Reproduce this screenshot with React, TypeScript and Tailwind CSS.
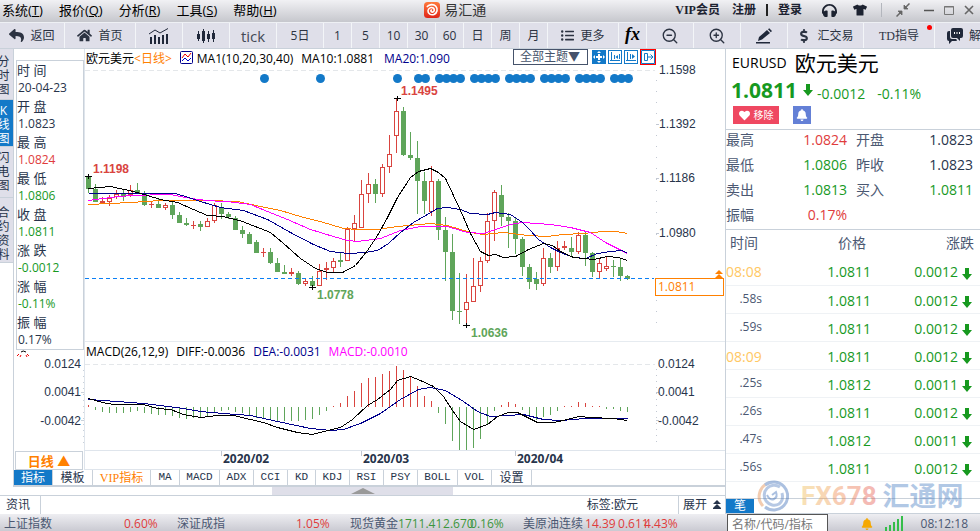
import type { ReactNode } from "react";
import { FaReply, FaHome, FaTshirt, FaHeadphones, FaDollarSign, FaHeart, FaBell, FaListUl } from "react-icons/fa";
import { ZoomIn, ZoomOut } from "lucide-react";

const RED = "#d9443f";
const GREEN = "#5fa55a";
const NAVY = "#00008b";

// [open/close top, open/close bottom, high, low, rising]
type Candle = [number, number, number, number, 0 | 1];

const candles: Candle[] = [
  [176, 189, 174, 193, 0], [189, 202, 184, 202, 0], [201, 203, 197, 203, 1], [198, 202, 195, 206, 1],
  [194, 197, 190, 199, 1], [193, 197, 190, 201, 0], [190, 195, 185, 197, 1], [190, 194, 183, 194, 0],
  [193, 205, 191, 206, 0], [204, 205, 202, 208, 1], [204, 208, 198, 208, 0], [205, 208, 203, 210, 1],
  [205, 215, 200, 219, 0], [215, 223, 212, 223, 0], [223, 225, 218, 226, 0], [225, 226, 221, 229, 1],
  [224, 227, 221, 231, 0], [221, 227, 218, 227, 1], [205, 221, 203, 223, 1], [207, 214, 203, 219, 0],
  [214, 217, 212, 219, 0], [218, 230, 216, 230, 0], [230, 234, 226, 238, 0], [234, 244, 232, 244, 0],
  [242, 253, 240, 253, 0], [252, 253, 248, 257, 1], [252, 263, 248, 264, 0], [263, 272, 258, 272, 0],
  [272, 274, 265, 274, 0], [272, 274, 268, 276, 1], [273, 284, 271, 285, 0], [281, 284, 278, 286, 1],
  [281, 286, 276, 287, 0], [271, 286, 264, 286, 1], [268, 270, 262, 280, 1], [261, 268, 258, 273, 1],
  [260, 262, 252, 267, 0], [229, 261, 227, 261, 1], [223, 229, 215, 241, 1], [194, 228, 180, 228, 1],
  [184, 194, 173, 203, 1], [184, 194, 179, 203, 0], [167, 194, 164, 197, 1], [154, 167, 135, 173, 1],
  [111, 136, 98, 153, 1], [111, 155, 107, 156, 0], [155, 158, 132, 160, 0], [158, 181, 141, 214, 0],
  [181, 201, 172, 214, 0], [181, 212, 166, 216, 1], [181, 230, 179, 240, 0], [230, 252, 217, 281, 0],
  [252, 311, 234, 320, 0], [311, 312, 273, 324, 0], [302, 310, 274, 325, 1], [286, 302, 258, 302, 1],
  [261, 286, 257, 292, 1], [221, 261, 213, 263, 1], [192, 221, 190, 241, 1], [195, 217, 185, 226, 0],
  [217, 221, 213, 248, 0], [221, 239, 218, 254, 0], [239, 267, 237, 276, 0], [267, 282, 264, 289, 0],
  [279, 284, 272, 290, 0], [258, 284, 248, 286, 1], [258, 267, 253, 273, 0], [248, 267, 241, 271, 1],
  [246, 248, 241, 250, 1], [248, 252, 237, 257, 0], [235, 252, 232, 254, 1], [235, 253, 232, 266, 0],
  [253, 272, 252, 277, 0], [263, 272, 258, 278, 1], [266, 269, 256, 271, 1], [266, 267, 260, 277, 0],
  [267, 276, 259, 281, 0], [276, 279, 275, 280, 0],
];

// end of each histogram bar, the zero line is at 407
const histogram = [
  405, 410, 412, 413, 413, 413, 412, 411, 413, 414, 415, 415, 416, 418, 419, 418, 417, 417, 412, 411,
  410, 412, 413, 415, 418, 419, 420, 421, 421, 421, 421, 420, 419, 415, 411, 406, 403, 396, 391, 383,
  378, 377, 374, 371, 366, 370, 376, 386, 396, 401, 413, 424, 441, 450, 450, 448, 439, 425, 411, 405,
  402, 404, 410, 415, 420, 417, 415, 411, 406, 406, 402, 403, 406, 406, 409, 409, 411, 412,
];

const averages = [
  {
    color: "#ff8000",
    points: "88,204 110,203 130,202 160,200 207,200 237,201 260,206 280,210 303,217 320,221 343,228 357,229 377,229 397,226 430,223 447,225 460,229 470,232 483,234 503,232 527,235 547,236 563,234 583,233 603,231 615,231 627,233",
  },
  {
    color: "#ff00ff",
    points: "88,200 110,197 130,195 170,194 180,196 197,199 220,201 227,201 250,204 267,211 287,219 310,229 333,236 347,240 357,241 380,238 400,230 420,226 447,226 460,230 467,232 483,233 495,229 510,224 522,222 550,224 570,227 590,232 605,242 627,253",
  },
  {
    color: NAVY,
    points: "88,193 175,193 188,197 200,201 220,207 243,210 267,219 290,232 313,244 330,251 348,253 365,252 377,250 388,243 400,232 413,222 427,214 437,208 447,207 460,209 470,213 487,214 495,212 510,214 522,222 530,230 538,239 550,247 560,252 573,257 585,258 597,253 610,251 622,250 627,253",
  },
  {
    color: "#000",
    points: "88,188 110,186 133,191 147,195 160,199 177,202 193,209 207,215 223,216 242,221 270,232 283,243 300,258 315,268 327,272 342,272 355,265 367,250 377,235 387,217 397,197 410,177 418,171 430,168 438,172 445,178 460,210 470,233 480,251 488,255 495,254 503,257 515,256 528,249 543,243 552,245 560,251 573,257 583,258 593,259 607,256 618,257 627,260",
  },
];

const macdLines = [
  {
    color: NAVY,
    points: "88,399 103,400 143,403 167,406 183,408 200,411 223,413 250,415 277,421 310,428 330,430 343,429 360,423 380,413 400,399 418,389 430,387 445,390 463,401 477,411 490,416 523,414 543,419 560,420 585,418 627,418",
  },
  {
    color: "#000",
    points: "88,398 102,402 113,404 143,404 157,408 170,409 183,414 200,417 217,415 233,415 250,419 263,422 277,427 297,432 312,434 323,431 340,427 352,419 367,405 377,399 390,389 397,380 410,376 420,380 433,386 443,396 452,410 460,421 473,429 487,424 497,416 508,412 517,412 527,417 537,422 553,422 567,419 578,416 590,417 613,418 627,420",
  },
];

const newsDots = [
  264, 320, 397, 418, 425, 439, 446, 453, 460, 474, 481, 488, 495, 509, 516, 523, 530, 544, 551, 558,
  565, 579, 586, 593, 600, 614, 621, 628,
];

const quote = [
  { label: "时 间", value: "20-04-23", color: "text-[#27344b]" },
  { label: "开 盘", value: "1.0823", color: "text-[#27344b]" },
  { label: "最 高", value: "1.0824", color: "text-[#e03c3c]" },
  { label: "最 低", value: "1.0806", color: "text-[#17991f]" },
  { label: "收 盘", value: "1.0811", color: "text-[#17991f]" },
  { label: "涨 跌", value: "-0.0012", color: "text-[#17991f]" },
  { label: "涨 幅", value: "-0.11%", color: "text-[#17991f]" },
  { label: "振 幅", value: "0.17%", color: "text-[#27344b]" },
];

const ticks = [
  { time: "08:08", price: "1.0811", change: "0.0012" },
  { time: ".58s", price: "1.0811", change: "0.0012" },
  { time: ".59s", price: "1.0811", change: "0.0012" },
  { time: "08:09", price: "1.0811", change: "0.0012" },
  { time: ".25s", price: "1.0812", change: "0.0011" },
  { time: ".26s", price: "1.0811", change: "0.0012" },
  { time: ".47s", price: "1.0812", change: "0.0011" },
  { time: ".56s", price: "1.0811", change: "0.0012" },
];

const menus = [
  ["系统", "T"],
  ["报价", "Q"],
  ["分析", "R"],
  ["工具", "S"],
  ["帮助", "H"],
];

const indicators = [
  { name: "MA", width: "w-[29px]" },
  { name: "MACD", width: "w-10" },
  { name: "ADX", width: "w-[34px]" },
  { name: "CCI", width: "w-[34px]" },
  { name: "KD", width: "w-7" },
  { name: "KDJ", width: "w-[34px]" },
  { name: "RSI", width: "w-[34px]" },
  { name: "PSY", width: "w-[34px]" },
  { name: "BOLL", width: "w-10" },
  { name: "VOL", width: "w-[34px]" },
];

function TitleBar() {
  return (
    <header className="flex h-[22px] shrink-0 items-center justify-between bg-linear-to-b from-[#f1f1f4] to-[#c6c7cd] pb-0.5 text-[#1c2230]">
      <nav className="flex flex-[426] gap-4 pl-0.5 text-[13px] leading-5">
        {menus.map(([label, key]) => (
          <button key={key} className="whitespace-nowrap text-black">
            {label}(<u>{key}</u>)
          </button>
        ))}
      </nav>
      <div className="flex items-center gap-1 text-sm leading-5 text-[#333]">
        <svg className="size-4" viewBox="0 0 16 16">
          <defs>
            <linearGradient id="logo" x1="0" y1="0" x2="0" y2="1">
              <stop offset="0" stopColor="#ff7a3c" />
              <stop offset="1" stopColor="#e02418" />
            </linearGradient>
          </defs>
          <rect width="16" height="16" rx="3.5" fill="url(#logo)" />
          <path
            d="M3.3 4.6C5.2 2.2 9.6 1.8 11.8 4.2 14.2 6.8 13.3 11 10 12.4 7 13.6 3.8 11.7 4 8.7 4.2 6 7.2 4.7 9.2 6 11 7.3 10.4 9.9 8.4 10.1 6.9 10.2 6.4 8.6 7.4 8"
            fill="none"
            stroke="#fff"
            strokeWidth="1.6"
            strokeLinecap="round"
          />
        </svg>
        易汇通
      </div>
      <div className="flex flex-[492] items-center justify-end pr-1.5 text-[12px] leading-5 font-bold">
        <button className="whitespace-nowrap">
          <span className="font-['Liberation_Serif']">VIP</span>会员
        </button>
        <button className="ml-3">注册</button>
        <i className="mx-2.5 h-3 w-0.5 bg-[#222]" />
        <button>登录</button>
        <button aria-label="客服" className="ml-5">
          <FaHeadphones size={15} />
        </button>
        <button aria-label="皮肤" className="ml-4">
          <FaTshirt size={14} />
        </button>
        <i className="mx-3.5 h-3.5 w-px bg-[#b3b6bd]" />
        <button aria-label="缩小窗口">
          <svg className="size-3.5" viewBox="0 0 14 14" fill="#666" stroke="#666" strokeWidth="1.5">
            <path d="M13.5.5 9 5M.5 13.5 5 9" />
            <path d="M8 2v4h4zM6 12V8H2z" strokeWidth=".8" />
          </svg>
        </button>
        <button aria-label="最小化" className="ml-3.5">
          <svg className="h-3 w-2.5" viewBox="0 0 10 12">
            <path d="M0 6.5h10" stroke="#555" strokeWidth="1.5" />
          </svg>
        </button>
        <button aria-label="最大化" className="ml-2.5">
          <svg className="h-3 w-2.5" viewBox="0 0 10 12" fill="none" stroke="#777">
            <path d="M.5 2.5h9v8h-9zM0 3h10" />
          </svg>
        </button>
        <button aria-label="关闭" className="ml-2.5">
          <svg className="h-3 w-2.5" viewBox="0 0 10 12" stroke="#666" strokeWidth="1.6">
            <path d="m1 2 8 8M9 2l-8 8" />
          </svg>
        </button>
      </div>
    </header>
  );
}

function Tool({ width, label, children }: { width: string; label?: string; children: ReactNode }) {
  return (
    <button
      aria-label={label}
      className={`relative flex h-full shrink-0 items-center justify-center gap-1.5 border-r border-[#f3f5f8] whitespace-nowrap ${width}`}
    >
      {children}
    </button>
  );
}

function Toolbar() {
  return (
    <div className="flex h-[27px] shrink-0 overflow-hidden border-t border-b border-t-[#eef0f4] border-b-[#c9d1da] bg-[#dfdfe9] text-xs text-[#2c3342]">
      <Tool width="w-[65px]">
        <FaReply size={15} />
        返回
      </Tool>
      <Tool width="w-[71px]">
        <FaHome size={15} />
        首页
      </Tool>
      <Tool width="w-[47px]" label="分时">
        <svg className="h-4 w-5" viewBox="0 0 20 16" fill="#20283a">
          <path d="M1 9h2v7H1zM5 7h2v9H5zM9 9h2v7H9zM13 7h2v9h-2zM17 6h2v10h-2z" />
          <path d="m0 6 6-4 5 3 8-4.5" fill="none" stroke="#20283a" />
        </svg>
      </Tool>
      <Tool width="w-[47px]" label="K线">
        <svg className="h-4 w-5" viewBox="0 0 20 16" fill="#20283a">
          <path d="M2 3h1v10H2zM1 6h3v5H1zM7 1h1v14H7zM6 3h3v10H6zM12 3h1v11h-1zM11 6h3v5h-3zM17 2h1v12h-1zM16 5h3v6h-3z" />
        </svg>
      </Tool>
      <Tool width="w-[47px]">
        <span className="text-[15px] text-[#454a56]">tick</span>
      </Tool>
      <Tool width="w-[47px]">5日</Tool>
      {["1", "5", "10", "30", "60", "日", "周", "月"].map((p) => (
        <Tool key={p} width="w-7">
          {p}
        </Tool>
      ))}
      <Tool width="w-[71px]">
        <FaListUl size={13} />
        更多
      </Tool>
      <Tool width="w-7">
        <span className="pb-1 font-['Liberation_Serif'] text-lg leading-none font-bold text-black italic">fx</span>
      </Tool>
      <Tool width="w-[47px]" label="缩小">
        <ZoomOut size={18} strokeWidth={1.8} />
      </Tool>
      <Tool width="w-[47px]" label="放大">
        <ZoomIn size={18} strokeWidth={1.8} />
      </Tool>
      <Tool width="w-[47px]" label="画线">
        <svg className="h-4 w-[18px]" viewBox="0 0 18 16" fill="#20283a">
          <path d="m4 9 8-7 3 3-8 6.5L3 13zM13 1.2l1.2-.9L17 3l-1.2 1.2zM1 14h14v1.6H1z" />
        </svg>
      </Tool>
      <Tool width="w-[76px]">
        <FaDollarSign size={14} />
        汇交易
      </Tool>
      <Tool width="w-[71px]">
        <span>
          <span className="font-['Liberation_Serif']">TD</span>指导
        </span>
        <i className="absolute top-0.5 right-0.5 size-[5px] rounded-full bg-[#f00]" />
      </Tool>
      <Tool width="w-[71px]">
        <svg className="size-4" viewBox="0 0 16 16" fill="#20283a">
          <path d="M6 0h8q2 0 2 2v6q0 2-2 2h-1v3l-3-3H6q-2 0-2-2V2q0-2 2-2z" />
          <path d="M0 5q0-2 2-2h1v6q0 2 2 2h4l1 1q0 1-1 1H5l-3 3v-3q-2 0-2-2z" />
          <path d="M7 4h1v2H7zM9.500 4h1v2h-1zM12 4h1v2h-1z" fill="#fff" />
        </svg>
        解盘
      </Tool>
    </div>
  );
}

function SideTabs() {
  return (
    <nav className="flex w-3.5 shrink-0 flex-col overflow-hidden border-r border-[#c9d1da] text-xs leading-[14px] text-[#27344b]">
      {[
        { label: "分时图", style: "h-[51px] bg-[#dfdfe9] pt-1.5" },
        { label: "K线图", style: "h-[47px] bg-[#1379c8] text-white pt-1" },
        { label: "闪电图", style: "h-[51px] bg-[#dfdfe9] pt-1" },
        { label: "合约资料", style: "h-[65px] bg-[#dfdfe9] pt-2" },
      ].map((tab) => (
        <button key={tab.label} className={`flex flex-col items-center border-b border-[#c9d1da] ${tab.style}`}>
          {tab.label.split("").map((c) => (
            <span key={c} className="-ml-1.5">{c}</span>
          ))}
        </button>
      ))}
    </nav>
  );
}

function QuoteColumn() {
  return (
    <div className="flex w-[71px] shrink-0 flex-col border-r border-[#dfe5ec] pt-[11px]">
      <dl className="ml-0.5 border border-[#c9d1da] bg-white text-xs leading-[18px]">
        {quote.map((q) => (
          <div key={q.label}>
            <dt className="text-[13px] leading-[18px] text-[#27344b]">{q.label}</dt>
            <dd className={`pl-px ${q.color}`}>{q.value}</dd>
          </div>
        ))}
      </dl>
      <svg className="block h-[101px] w-full" viewBox="14 350 70 101">
        <path d="M21 352q2-2 5 0" fill="none" stroke="#000" />
        <path d="m19 354-2 2m4-1-1 2m6-2 1 2m0-3 2 2" stroke="#e00" fill="none" />
        <g className="font-['Liberation_Sans'] text-xs" fill="#27344b" textAnchor="end">
          <text x="81" y="368">0.0124</text>
          <text x="81" y="396">0.0041</text>
          <text x="81" y="425">-0.0042</text>
        </g>
        <path d="M83.500 370v76" stroke="#c9d1da" strokeDasharray="1 5" />
        <path d="M81 392.500h3M81 420.500h3" stroke="#c9d1da" />
      </svg>
      <button className="mx-px h-[19px] border border-[#c9d1da] text-[13px] leading-4 font-bold text-[#ff8000]">日线 ▲</button>
    </div>
  );
}

function PriceChart() {
  return (
    <svg className="block h-auto w-full overflow-visible" viewBox="85 69 640 273" shapeRendering="crispEdges">
      <path d="M85 70.500h570" stroke="#e4e7ea" strokeDasharray="5 3" />
      <path d="M656.500 80v252" stroke="#c2c8d2" strokeDasharray="1 10" />
      <path d="M656 124.500h3M656 178.500h3M656 233.500h3" stroke="#c2c8d2" />
      <g fill="#1379c8" shapeRendering="auto">
        {newsDots.map((x) => (
          <circle key={x} cx={x + 0.5} cy="78.500" r="4.500" />
        ))}
      </g>
      {candles.map(([top, bottom, high, low, up], i) => {
        const x = 88 + i * 7;
        const hollow = up && bottom - top > 2;
        return (
          <g key={i}>
            <rect x={x} y={high} width="1" height={low - high} fill={up ? RED : GREEN} />
            <rect x={x - 2} y={top} width="5" height={bottom - top} fill={up ? RED : GREEN} />
            {hollow && <rect x={x - 1} y={top + 1} width="3" height={bottom - top - 2} fill="#fff" />}
          </g>
        );
      })}
      <g fill="none" transform="translate(.5 .5)">
        {averages.map((line) => (
          <polyline key={line.color} points={line.points} stroke={line.color} />
        ))}
      </g>
      <path d="M85 278.500h569" stroke="#0a7ff5" strokeDasharray="4 3" />
      <path d="M85 176.500h7M88.500 174v5M394 98.500h7M397.500 96v5M309 287.500h7M312.500 285v5M463 325.500h7M466.500 323v5" stroke="#000" />
      <g className="font-['Liberation_Sans'] text-xs font-bold">
        <text x="93" y="173" fill={RED}>1.1198</text>
        <text x="401" y="95" fill={RED}>1.1495</text>
        <text x="317" y="299" fill={GREEN}>1.0778</text>
        <text x="471" y="337" fill={GREEN}>1.0636</text>
      </g>
      <g className="font-['Liberation_Sans'] text-xs" fill="#27344b">
        <text x="659" y="74">1.1598</text>
        <text x="659" y="128">1.1392</text>
        <text x="659" y="182">1.1186</text>
        <text x="659" y="237">1.0980</text>
      </g>
      <rect x="655.500" y="278.500" width="68" height="17" fill="#fff" stroke="#ff8000" />
      <text x="658" y="291" className="text-xs" fill="#ff8000">1.0811</text>
      <path d="m719 270 4 4h-8zM719 274l4 4h-8z" fill="#ff8000" shapeRendering="auto" />
      <path d="M85 341.500h640" stroke="#e6ebf0" />
    </svg>
  );
}

function MacdChart() {
  return (
    <svg className="block h-auto w-full overflow-visible" viewBox="85 362 640 108" shapeRendering="crispEdges">
      <path d="M85 364.500h570" stroke="#e4e7ea" strokeDasharray="5 3" />
      <path d="M656.500 369v78" stroke="#c2c8d2" strokeDasharray="1 5" />
      <path d="M656 392.500h3M656 420.500h3" stroke="#c2c8d2" />
      {histogram.map((end, i) => (
        <rect
          key={i}
          x={88 + i * 7}
          y={Math.min(end, 407)}
          width="1"
          height={Math.abs(end - 407)}
          fill={end < 407 ? RED : GREEN}
        />
      ))}
      <g fill="none" transform="translate(.5 .5)">
        {macdLines.map((line) => (
          <polyline key={line.color} points={line.points} stroke={line.color} />
        ))}
      </g>
      <g className="font-['Liberation_Sans'] text-xs" fill="#27344b">
        <text x="658" y="368">0.0124</text>
        <text x="658" y="396">0.0041</text>
        <text x="658" y="425">-0.0042</text>
      </g>
      <path d="M85 450.500h640M85 469.500h640" stroke="#dfe5ec" />
      <path d="M221.500 451v5M361.500 451v5M515.500 451v5" stroke="#c2c8d2" />
      <g className="text-xs font-bold" fill="#27344b">
        <text x="223" y="463">2020/02</text>
        <text x="363" y="463">2020/03</text>
        <text x="517" y="463">2020/04</text>
      </g>
    </svg>
  );
}

function ChartHeader() {
  const box = "size-[14px] border border-[#1379c8] p-px text-[#1379c8]";
  return (
    <div className="flex h-5 items-start pl-px text-xs leading-5 whitespace-nowrap">
      <span className="text-black">欧元美元</span>
      <span className="text-[#ff8000]">&lt;日线&gt;</span>
      <svg className="mt-0.5 ml-2 size-[13px]" viewBox="0 0 13 13" fill="none">
        <rect x=".5" y=".5" width="12" height="12" rx="1" fill="#fff" stroke={NAVY} />
        <path d="m2 7 3-4 3 3 3-4" stroke="#e00" />
        <path d="m2 10 3-3 3 3 3-3" stroke="#00c" />
      </svg>
      <span className="ml-1 text-black">MA1(10,20,30,40)</span>
      <span className="ml-2 text-black">MA10:1.0881</span>
      <span className="ml-2.5 text-[#00008b]">MA20:1.090</span>
      <div className="ml-auto flex items-center gap-0.5 pr-[69px]">
        <select
          aria-label="主题"
          className="mr-0.5 h-4 w-[75px] appearance-none border border-[#46536b] bg-white pl-1.5 text-xs leading-[14px] text-[#46536b]"
        >
          <option>全部主题▼</option>
        </select>
        <button aria-label="移动" className="size-[14px] bg-[#1379c8] p-px text-white">
          <svg viewBox="0 0 12 12" className="size-3" fill="currentColor">
            <path d="M5 3h2v2h2v2H7v2H5V7H3V5h2zM6 0l2 2H4zM6 12l2-2H4zM0 6l2-2v4zM12 6l-2-2v4z" />
          </svg>
        </button>
        <button aria-label="左移" className={box}>
          <svg viewBox="0 0 10 10" className="size-2.5" stroke="currentColor" fill="currentColor">
            <path d="M1.500 0v9M0 8.500h10M4.500 3v4M9.500 2v5" fill="none" />
            <path d="M8 3v4L5.500 5z" stroke="none" />
          </svg>
        </button>
        <button aria-label="右移" className={box}>
          <svg viewBox="0 0 10 10" className="size-2.5" stroke="currentColor" fill="currentColor">
            <path d="M1.500 0v9M0 8.500h10M4.500 2v5" fill="none" />
            <path d="M6 2v5l3-2.500z" stroke="none" />
          </svg>
        </button>
        <button aria-label="跳到最新" className="size-4 border border-[#f00] text-[#1379c8]">
          <svg viewBox="0 0 14 14" className="size-3.5" stroke="currentColor" fill="none">
            <path d="M.5.5h13v13H.5zM3.500 3.500h3v7h-3zM6 7h6M9.500 4.500 12 7 9.500 9.500" />
          </svg>
        </button>
      </div>
    </div>
  );
}

function IndicatorTabs() {
  const tab = "h-full shrink-0 border-r border-[#c9d1da]";
  return (
    <div className="flex h-[17px] border-b-2 border-[#c9d1da] text-xs leading-[15px] text-[#27344b]">
      <button className={`${tab} w-[39px] bg-[#1379c8] text-white`}>指标</button>
      <button className={`${tab} w-10`}>模板</button>
      <button className={`${tab} w-[58px] text-[#ff8000]`}>
        <span className="font-['Liberation_Serif']">VIP</span>指标
      </button>
      {indicators.map((item) => (
        <button key={item.name} className={`${tab} font-['Liberation_Mono'] text-[11px] ${item.width}`}>
          {item.name}
        </button>
      ))}
      <button className={`${tab} w-10`}>设置</button>
    </div>
  );
}

function DownArrow({ className }: { className: string }) {
  return (
    <svg className={`inline-block ${className}`} viewBox="0 0 10 12" fill="#17991f">
      <path d="M3 0h4v6h3l-5 6-5-6h3z" />
    </svg>
  );
}

function QuotePanel() {
  const green = "text-[#17991f]";
  return (
    <aside className="relative flex w-[255px] shrink-0 flex-col overflow-hidden border-l border-[#c9d1da] bg-white text-sm text-[#4b5872]">
      <div className="h-[81px] border-b border-[#c9d1da] pl-1.5">
        <h1 className="flex items-center gap-2 leading-7 text-black">
          EURUSD <span className="text-[21px] leading-7">欧元美元</span>
        </h1>
        <div className={`flex h-[26px] items-center ${green}`}>
          <b className="-ml-px text-[21px] leading-[26px]">1.0811</b>
          <DownArrow className="ml-1.5 h-3 w-2.5" />
          <span className="ml-1 self-end leading-[18px]">-0.0012</span>
          <span className="ml-3 self-end leading-[18px]">-0.11%</span>
        </div>
        <div className="flex gap-3.5 pt-[3px] pl-px text-[10px] text-white">
          <button className="flex h-[18px] w-[46px] items-center justify-center gap-1 bg-[#ef4861]">
            <FaHeart size={11} />
            移除
          </button>
          <button aria-label="提醒" className="flex size-[18px] items-center justify-center bg-[#6480d6]">
            <FaBell size={12} />
          </button>
        </div>
      </div>

      <table className="w-full table-fixed border-b border-[#c9d1da] leading-5">
        <tbody>
          {[
            ["最高", "1.0824", "text-[#e03c3c]", "开盘", "1.0823", "text-[#27344b]"],
            ["最低", "1.0806", green, "昨收", "1.0823", "text-[#27344b]"],
            ["卖出", "1.0813", green, "买入", "1.0811", green],
            ["振幅", "0.17%", "text-[#e03c3c]", "", "", ""],
          ].map(([a, av, ac, b, bv, bc]) => (
            <tr key={a} className="h-[25px] align-top last:h-6">
              <th className="w-14 text-left font-normal">{a}</th>
              <td className={`w-[65px] text-right ${ac}`}>{av}</td>
              <th className="w-16 pl-[9px] text-left font-normal">{b}</th>
              <td className={`pr-[7px] text-right ${bc}`}>{bv}</td>
            </tr>
          ))}
        </tbody>
      </table>

      <table className="w-full table-fixed">
        <thead>
          <tr className="h-7">
            <th className="w-14 pb-0.5 pl-1 text-left font-normal">时间</th>
            <th className="w-[84px] pb-0.5 text-right font-normal">价格</th>
            <th className="pr-1.5 pb-0.5 text-right font-normal">涨跌</th>
          </tr>
        </thead>
        <tbody>
          {ticks.map((t, i) => (
            <tr key={i} className="h-7 border-b border-[#eff2f5] leading-5">
              {t.time.startsWith(".") ? (
                <td className="pr-5 pb-0.5 text-right text-xs">{t.time}</td>
              ) : (
                <td className="pt-0.5 text-[#ffc864]">{t.time}</td>
              )}
              <td className={`pt-0.5 text-right ${green}`}>
                <span className="-mr-[5px]">{t.price}</span>
              </td>
              <td className={`pt-0.5 pr-2 text-right whitespace-nowrap ${green}`}>
                {t.change}
                <DownArrow className="ml-1 h-3 w-2.5" />
              </td>
            </tr>
          ))}
        </tbody>
      </table>

      <div className="mt-auto flex h-4 border-t border-b border-[#c9d1da]">
        <button className="w-7 bg-[#1379c8] text-xs leading-[14px] text-white">笔</button>
      </div>

      {/* watermark over the end of the list */}
      <div className="pointer-events-none absolute bottom-0 left-[31px] flex h-9 items-center whitespace-nowrap opacity-40">
        <svg className="size-8" viewBox="0 0 32 32" fill="none">
          <path d="M6 26A14 14 0 0 1 12 3" stroke="#e2813c" strokeWidth="3" />
          <path d="M8 5A14 14 0 1 1 8 27" stroke="#2f64b4" strokeWidth="3" />
          <path d="M23 7A10 10 0 1 0 22 24Q27 20 25 13" stroke="#4b78bd" strokeWidth="3" />
          <path d="M10 15q3 6 7 4t2-7l-4 3" stroke="#2f64b4" strokeWidth="2" />
        </svg>
        <b className="ml-3 font-['Roboto'] text-[26px] leading-9">
          <span className="text-[#f0b24a]">F</span>
          <span className="text-[#f09c48]">X</span>
          <span className="text-[#ee8446]">6</span>
          <span className="text-[#ea6a44]">7</span>
          <span className="text-[#e65546]">8</span>
        </b>
        <b className="ml-1.5 text-[27px] leading-9 text-[#3f78bf]">汇通网</b>
      </div>
    </aside>
  );
}

function NewsBar() {
  return (
    <>
      <div className="flex h-[9px] justify-center border-b border-[#c9d1da]">
        <button aria-label="展开面板" className="flex h-full w-1/4 items-center justify-center bg-[#dfdfe9]">
          <svg className="h-1.5 w-6" viewBox="0 0 24 6" fill="#999">
            <path d="m12 0 12 6H0z" />
          </svg>
        </button>
      </div>
      <div className="flex h-[18px] items-center text-xs leading-4 text-[#27344b]">
        <button className="h-full w-[41px] border-r border-[#c9d1da] pr-1">资讯</button>
        <span className="mr-10 ml-auto">标签:欧元</span>
        <button className="flex h-full w-[47px] items-center justify-center gap-1.5 border-l border-[#c9d1da]">
          展开
          <svg className="h-2.5 w-2" viewBox="0 0 8 10" fill="#27344b">
            <path d="m4 0 4 4H0zM4 4l4 4H0zM0 8h8v1H0z" />
          </svg>
        </button>
      </div>
    </>
  );
}

function StatusBar() {
  return (
    <footer className="flex h-[17px] shrink-0 bg-linear-to-b from-[#eeeef2] to-[#cacad2] text-xs leading-[19px] whitespace-nowrap text-[#4b5872]">
      <div className="flex min-w-0 flex-1 overflow-hidden pl-1">
        <span className="w-[120px]">上证指数</span>
        <span className="w-[53px] text-[#e03c3c]">0.60%</span>
        <span className="w-[119px]">深证成指</span>
        <span className="w-[54px] text-[#e03c3c]">1.05%</span>
        <span>现货黄金</span>
        <span className="w-[45px] text-[#3c963c]">1711.41</span>
        <span className="w-[27px] text-[#3c963c]">2.670</span>
        <span className="w-[53px] text-[#3c963c]">0.16%</span>
        <span className="w-[62px]">美原油连续</span>
        <span className="w-[33px] text-[#e03c3c]">14.39</span>
        <span className="w-[26px] text-[#e03c3c]">0.611</span>
        <span className="text-[#e03c3c]">4.43%</span>
      </div>
      <div className="flex w-[253px] shrink-0 overflow-hidden">
        <input
          aria-label="搜索"
          placeholder="名称/代码/指标"
          className="h-5 w-[101px] border border-[#555] bg-white pl-1 text-xs placeholder:text-[#777]"
        />
        <FaBell className="mt-1 ml-[33px] text-[#f5a800]" size={12} />
        <svg className="mt-0.5 ml-3 h-[15px] w-[18px]" viewBox="0 0 18 15" fill="#35bd4a">
          <path d="M0 11h2v4H0zM4 9h2v6H4zM8 6h2v9H8zM12 3h2v12h-2zM16 0h2v15h-2z" />
        </svg>
        <time className="mr-3 ml-auto">08:12:18</time>
      </div>
    </footer>
  );
}

export default function App() {
  return (
    <div className="flex min-h-screen flex-col overflow-hidden bg-white font-['Open_Sans','Noto_Sans_CJK_SC',sans-serif]">
      <TitleBar />
      <Toolbar />
      <div className="flex flex-1">
        <main className="flex min-w-0 flex-1 flex-col">
          <div className="flex flex-1">
            <SideTabs />
            <div className="flex min-w-0 flex-1 flex-col">
              <div className="flex flex-1">
                <QuoteColumn />
                <div className="min-w-0 flex-1">
                  <ChartHeader />
                  <PriceChart />
                  <div className="flex h-5 gap-2 pl-px text-xs leading-5 whitespace-nowrap text-black">
                    <span>MACD(26,12,9)</span>
                    <span>DIFF:-0.0036</span>
                    <span className="text-[#00008b]">DEA:-0.0031</span>
                    <span className="text-[#ff00ff]">MACD:-0.0010</span>
                  </div>
                  <MacdChart />
                </div>
              </div>
              <IndicatorTabs />
            </div>
          </div>
          <NewsBar />
        </main>
        <QuotePanel />
      </div>
      <StatusBar />
    </div>
  );
}
